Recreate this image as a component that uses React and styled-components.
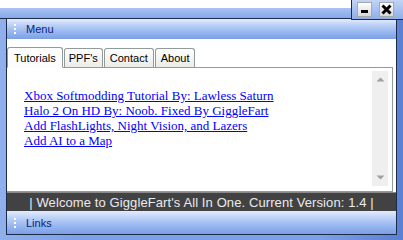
import React from 'react';
import styled, { createGlobalStyle } from 'styled-components';

const Global = createGlobalStyle`
  html, body { margin: 0; padding: 0; background: #ffffff; }
  body { width: 403px; height: 240px; overflow: hidden; }
`;

const Page = styled.div`
  width: 403px;
  height: 240px;
  display: flex;
  flex-direction: column;
  background: #ffffff;
  font-family: "Liberation Sans", Arial, sans-serif;
`;

const TopRow = styled.div`
  display: flex;
  height: 19px;
  flex: none;
`;

const TopStrip = styled.div`
  flex: 1;
  margin-top: 8px;
  background: linear-gradient(#a9c2f2, #86a8ea);
  border-bottom: 1px solid #1d2a48;
`;

const ButtonBox = styled.div`
  width: 52px;
  height: 20px;
  box-sizing: border-box;
  border: 1px solid #1d2a48;
  border-right: none;
  border-top: none;
  background: linear-gradient(#c2d4f6, #90aeea);
  display: flex;
  align-items: center;
  justify-content: space-between;
  padding: 0 9px 0 5px;
  position: relative;
  z-index: 1;
`;

const WinButton = styled.div`
  width: 15px;
  height: 15px;
  box-sizing: border-box;
  border: 1px solid #a8a8a8;
  background: linear-gradient(#ffffff, #d8d8d8);
  display: flex;
  align-items: center;
  justify-content: center;
`;

const Frame = styled.div`
  flex: 1;
  display: flex;
  background: linear-gradient(90deg, #90b0ec, #7c9fe6 20%, #7c9fe6 80%, #5a80d4);
  padding: 0 6px 5px 6px;
`;

const Panel = styled.div`
  flex: 1;
  display: flex;
  flex-direction: column;
  border: 1px solid #1d2a48;
  border-top: none;
  background: #ffffff;
`;

const Bar = styled.div`
  height: ${p => p.$h}px;
  flex: none;
  display: flex;
  align-items: center;
  gap: 10px;
  padding-left: 7px;
  background: linear-gradient(#e3ecfc, #b6cdf6 35%, #93b3f0 70%, #7d9fe2);
  color: #0a1e78;
  font-size: 11px;
`;

const Grip = styled.div`
  width: 2px;
  display: flex;
  flex-direction: column;
  gap: 2px;
  & > i {
    display: block;
    width: 2px;
    height: 2px;
    background: #ffffff;
  }
`;

const TabRow = styled.div`
  display: flex;
  align-items: flex-end;
  height: 27px;
  margin-top: 1px;
  border-bottom: 1px solid #919b9c;
  margin-right: 3px;
`;

const Tab = styled.div`
  height: ${p => (p.$active ? 21 : 19)}px;
  box-sizing: border-box;
  padding: 0 ${p => p.$pad}px;
  margin-bottom: ${p => (p.$active ? -1 : 0)}px;
  border: 1px solid #919b9c;
  border-bottom: ${p => (p.$active ? '1px solid #fcfcfe' : 'none')};
  border-radius: 3px 3px 0 0;
  background: ${p => (p.$active ? 'linear-gradient(#ffffff, #fcfcfe)' : 'linear-gradient(#ffffff, #ecebe6)')};
  color: #000000;
  font-size: 11px;
  display: flex;
  align-items: center;
  margin-left: ${p => (p.$first ? 0 : 1)}px;
`;

const Content = styled.div`
  flex: 1;
  display: flex;
  border-right: 1px solid #919b9c;
  border-bottom: 1px solid #919b9c;
  margin-right: 3px;
  padding: 3px 4px 5px 17px;
`;

const LinkList = styled.div`
  flex: 1;
  display: flex;
  flex-direction: column;
  padding-top: 17px;
`;

const TutLink = styled.a`
  font-family: "Liberation Serif", "Times New Roman", serif;
  font-size: 13px;
  line-height: 15px;
  color: #0000ff;
  text-decoration: underline;
`;

const Scroll = styled.div`
  width: 16px;
  background: #efefef;
  display: flex;
  flex-direction: column;
  justify-content: space-between;
  align-items: center;
  padding: 6px 0;
`;

const Status = styled.div`
  height: 18px;
  flex: none;
  background: #424242;
  border-top: 1px solid #8a8a8a;
  color: #eaeaf0;
  font-size: 13px;
  letter-spacing: 0.1px;
  display: flex;
  align-items: center;
  justify-content: center;
`;

const links = [
  'Xbox Softmodding Tutorial By: Lawless Saturn',
  'Halo 2 On HD By: Noob. Fixed By GiggleFart',
  'Add FlashLights, Night Vision, and Lazers',
  'Add AI to a Map',
];

const tabs = [
  { label: 'Tutorials', pad: 6, active: true },
  { label: "PPF's", pad: 4 },
  { label: 'Contact', pad: 5 },
  { label: 'About', pad: 5 },
];

const Dots = () => (
  <Grip>
    <i />
    <i />
    <i />
  </Grip>
);

export default function App() {
  return (
    <>
      <Global />
      <Page>
        <TopRow>
          <TopStrip />
          <ButtonBox>
            <WinButton>
              <svg width="9" height="9" viewBox="0 0 9 9">
                <rect x="1" y="5" width="7" height="3" fill="#000" />
              </svg>
            </WinButton>
            <WinButton>
              <svg width="11" height="11" viewBox="0 0 11 11">
                <path d="M1.5 1.5 L9.5 9.5 M9.5 1.5 L1.5 9.5" stroke="#000" strokeWidth="3" />
              </svg>
            </WinButton>
          </ButtonBox>
        </TopRow>
        <Frame>
          <Panel>
            <Bar $h={20}>
              <Dots />
              <span>Menu</span>
            </Bar>
            <TabRow>
              {tabs.map((t, i) => (
                <Tab key={t.label} $active={t.active} $pad={t.pad} $first={i === 0}>
                  {t.label}
                </Tab>
              ))}
            </TabRow>
            <Content>
              <LinkList>
                {links.map(l => (
                  <TutLink key={l} href="#">{l}</TutLink>
                ))}
              </LinkList>
              <Scroll>
                <svg width="9" height="5" viewBox="0 0 9 5">
                  <path d="M0.5 4.5 L4.5 0.5 L8.5 4.5 Z" fill="#a0a0a0" />
                </svg>
                <svg width="9" height="5" viewBox="0 0 9 5">
                  <path d="M0.5 0.5 L4.5 4.5 L8.5 0.5 Z" fill="#a0a0a0" />
                </svg>
              </Scroll>
            </Content>
            <Status>| Welcome to GiggleFart's All In One. Current Version: 1.4 |</Status>
            <Bar $h={23}>
              <Dots />
              <span>Links</span>
            </Bar>
          </Panel>
        </Frame>
      </Page>
    </>
  );
}
